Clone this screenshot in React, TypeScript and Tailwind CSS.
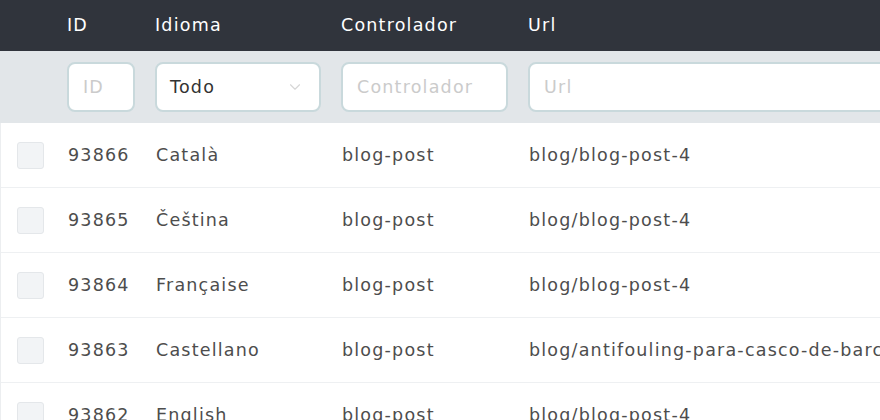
import { ChevronDown } from "lucide-react";

const rows = [
  { id: 93866, lang: "Català", ctrl: "blog-post", url: "blog/blog-post-4" },
  { id: 93865, lang: "Čeština", ctrl: "blog-post", url: "blog/blog-post-4" },
  { id: 93864, lang: "Française", ctrl: "blog-post", url: "blog/blog-post-4" },
  {
    id: 93863,
    lang: "Castellano",
    ctrl: "blog-post",
    url: "blog/antifouling-para-casco-de-barco",
  },
  { id: 93862, lang: "English", ctrl: "blog-post", url: "blog/blog-post-4" },
];

const cols = "grid grid-cols-[67px_88px_186px_187px_1fr]";

export default function App() {
  return (
    <div
      className="w-[880px] h-[420px] overflow-hidden bg-white"
      style={{ fontFamily: '"DejaVu Sans", sans-serif' }}
    >
      <div className="w-[1200px] text-[17.5px] tracking-[1.2px]">
        {/* header */}
        <div className={`${cols} h-[51px] items-center bg-[#30343c] text-white`}>
          <div />
          <div>ID</div>
          <div>Idioma</div>
          <div>Controlador</div>
          <div>Url</div>
        </div>

        {/* filters */}
        <div className={`${cols} h-[72px] items-center bg-[#e2e6e9]`}>
          <div />
          <div className="pr-5">
            <input
              placeholder="ID"
              className="w-full h-[50px] rounded-lg border-2 border-[#c9d9dc] bg-white px-[14px] tracking-[1.2px] placeholder:text-[#cbcbcb] outline-none"
            />
          </div>
          <div className="pr-5">
            <div className="flex h-[50px] items-center justify-between rounded-lg border-2 border-[#c9d9dc] bg-white pl-[13px] pr-[15px] text-[#333]">
              <span>Todo</span>
              <ChevronDown className="h-[18px] w-[18px] text-[#d6d6d6]" strokeWidth={1.5} />
            </div>
          </div>
          <div className="pr-5">
            <input
              placeholder="Controlador"
              className="w-full h-[50px] rounded-lg border-2 border-[#c9d9dc] bg-white px-[14px] tracking-[1.2px] placeholder:text-[#cbcbcb] outline-none"
            />
          </div>
          <div>
            <input
              placeholder="Url"
              className="w-full h-[50px] rounded-lg border-2 border-[#c9d9dc] bg-white px-[14px] tracking-[1.2px] placeholder:text-[#cbcbcb] outline-none"
            />
          </div>
        </div>

        {/* rows */}
        <div className="border-l border-[#eceef0]">
          {rows.map((r) => (
            <div
              key={r.id}
              className={`${cols} h-[65px] items-center border-b border-[#eef0f2] text-[#4d4d4d] whitespace-nowrap`}
            >
              <div className="pl-4">
                <div className="h-[27px] w-[27px] rounded-[3px] border border-[#e4e7ea] bg-[#f2f4f6]" />
              </div>
              <div>{r.id}</div>
              <div>{r.lang}</div>
              <div>{r.ctrl}</div>
              <div>{r.url}</div>
            </div>
          ))}
        </div>
      </div>
    </div>
  );
}
